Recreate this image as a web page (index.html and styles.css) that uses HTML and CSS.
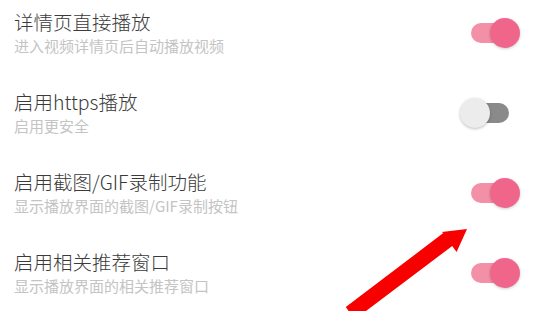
FILE: index.html
```
<!DOCTYPE html>
<html lang="zh-CN">
<head>
<meta charset="utf-8">
<link rel="stylesheet" href="styles.css">
</head>
<body>
<div class="list">
  <div class="row">
    <div class="text">
      <div class="title">详情页直接播放</div>
      <div class="sub">进入视频详情页后自动播放视频</div>
    </div>
    <div class="switch on"><span class="track"></span><span class="thumb"></span></div>
  </div>
  <div class="row">
    <div class="text">
      <div class="title">启用https播放</div>
      <div class="sub">启用更安全</div>
    </div>
    <div class="switch off"><span class="track"></span><span class="thumb"></span></div>
  </div>
  <div class="row">
    <div class="text">
      <div class="title">启用截图/GIF录制功能</div>
      <div class="sub">显示播放界面的截图/GIF录制按钮</div>
    </div>
    <div class="switch on"><span class="track"></span><span class="thumb"></span></div>
  </div>
  <div class="row">
    <div class="text">
      <div class="title">启用相关推荐窗口</div>
      <div class="sub">显示播放界面的相关推荐窗口</div>
    </div>
    <div class="switch on"><span class="track"></span><span class="thumb"></span></div>
  </div>
</div>
<svg class="arrow" width="534" height="311" viewBox="0 0 534 311">
  <polygon fill="#f80000" points="467,229 456.6,252.1 452.2,246.0 354.6,319.6 345.8,307.0 443.3,233.1 441.8,232.0"/>
</svg>
</body>
</html>
```
FILE: styles.css
```
html, body {
  margin: 0;
  padding: 0;
  background: #fff;
}
body {
  width: 534px;
  height: 311px;
  overflow: hidden;
  position: relative;
  font-family: "Noto Sans CJK SC", "Noto Sans", sans-serif;
}
.list {
  display: flex;
  flex-direction: column;
}
.row {
  height: 80px;
  display: flex;
  justify-content: space-between;
  align-items: flex-start;
  padding: 0 14px 0 14px;
}
.text {
  display: flex;
  flex-direction: column;
  padding-top: 9px;
}
.title {
  font-size: 19.5px;
  line-height: 25px;
  color: #3a3a3a;
  font-weight: 300;
}
.sub {
  font-size: 15px;
  line-height: 18px;
  margin-top: 3px;
  color: #c4c4c4;
}
.switch {
  position: relative;
  width: 60px;
  height: 30px;
  margin-top: 18px;
}
.track {
  position: absolute;
  left: 11px;
  top: 5px;
  width: 40px;
  height: 20px;
  border-radius: 10px;
}
.thumb {
  position: absolute;
  top: 0;
  width: 30px;
  height: 30px;
  border-radius: 50%;
}
.on .track { background: #f390a8; }
.on .thumb { left: 30px; background: #f0668b; box-shadow: 0 1px 3px rgba(0,0,0,0.2); }
.off .track { background: #8a8a8a; left: 10px; width: 39px; }
.off .thumb { left: 0; background: #ececec; box-shadow: 0 1px 3px rgba(0,0,0,0.25); }
.arrow {
  position: absolute;
  left: 0;
  top: 0;
}
```
